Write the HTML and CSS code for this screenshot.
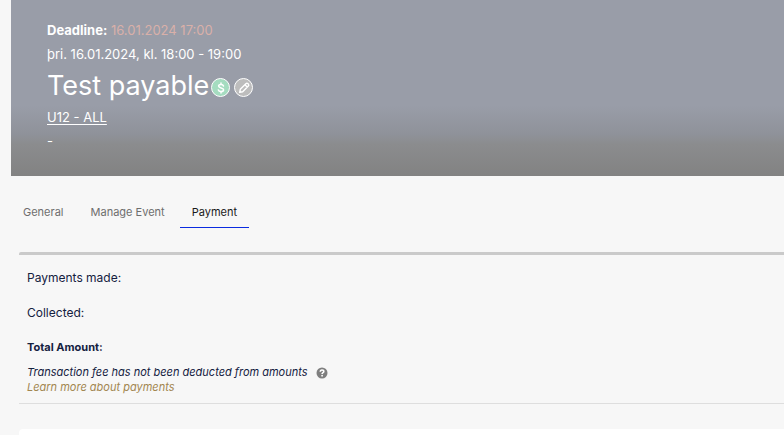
FILE: index.html
```html
<!DOCTYPE html>
<html lang="en">
<head>
    <meta charset="UTF-8">
    <meta name="viewport" content="width=device-width, initial-scale=1.0">
    <title>Test payable</title>
    <link rel="stylesheet" href="styles.css">
</head>
<body>
    <header class="event-header">
        <p class="deadline"><strong>Deadline:</strong> <span class="deadline-date">16.01.2024 17:00</span></p>
        <p class="event-time">þri. 16.01.2024, kl. 18:00 - 19:00</p>
        <div class="title-row">
            <h1>Test payable</h1>
            <div class="badges">
                <button class="badge badge-paid" type="button" aria-label="Payable">
                    <svg viewBox="0 0 16 16" width="16" height="16" fill="none" stroke="#fff" stroke-linecap="round">
                        <path stroke-width="1.5" d="M10.5 6C10.2 4.9 9.2 4.4 8 4.4C6.6 4.4 5.6 5 5.6 6.1C5.6 8.5 10.6 7.3 10.6 9.8C10.6 11 9.5 11.6 8 11.6C6.6 11.6 5.6 11 5.3 9.9M8 3V4.4M8 11.6V13"/>
                    </svg>
                </button>
                <button class="badge badge-edit" type="button" aria-label="Edit">
                    <svg viewBox="0 0 16 16" width="16" height="16" fill="none" stroke="#fff" stroke-linejoin="round">
                        <path stroke-width="1.4" d="M3.7 12.3L4.3 9.3L9.9 3.7C10.5 3.1 11.3 3.1 11.8 3.6L12.4 4.2C12.9 4.7 12.9 5.5 12.3 6.1L6.7 11.7ZM8.9 4.7L11.3 7.1"/>
                    </svg>
                </button>
            </div>
        </div>
        <a class="group-link" href="#">U12 - ALL</a>
        <p class="location">-</p>
    </header>

    <nav class="tabs">
        <a class="tab" href="#">General</a>
        <a class="tab" href="#">Manage Event</a>
        <a class="tab active" href="#">Payment</a>
    </nav>

    <main class="content">
        <section class="summary">
            <p class="summary-row">Payments made:</p>
            <p class="summary-row">Collected:</p>
            <p class="summary-row total">Total Amount:</p>
            <div class="note">
                <span>Transaction fee has not been deducted from amounts</span>
                <button class="help" type="button" aria-label="Help">
                    <svg viewBox="0 0 12 12" width="12" height="12">
                        <circle cx="6" cy="6" r="5.5" fill="#7f7f7f"/>
                        <path d="M4.3 4.7C4.3 3.6 5 3 6 3C7.1 3 7.8 3.6 7.8 4.5C7.8 5.6 6.1 5.6 6.1 6.9" fill="none" stroke="#fff" stroke-width="1.6"/>
                        <circle cx="6.1" cy="8.7" r="0.9" fill="#fff"/>
                    </svg>
                </button>
            </div>
            <a class="learn-more" href="#">Learn more about payments</a>
        </section>
        <section class="card"></section>
    </main>
</body>
</html>
```
FILE: styles.css
```css
* {
    box-sizing: border-box;
}
body {
    margin: 0;
    background-color: #f7f7f7;
    color: #14213f;
    font-family: Inter, "Liberation Sans", sans-serif;
    font-size: 11px;
    line-height: 15px;
}
p, h1 {
    margin: 0;
}
button {
    padding: 0;
    border: none;
    background: none;
    cursor: pointer;
}
svg {
    display: block;
}
.event-header {
    margin-left: 11px;
    padding: 18px 36px 23px;
    color: #fff;
    font-size: 13px;
    line-height: 24px;
    background: linear-gradient(to bottom, #999da8 0%, #999da8 60%, #8f929a 76%, #8b8c8e 82%, #828282 100%);
}
.deadline-date {
    color: #d9b0a9;
}
.title-row {
    display: flex;
    align-items: center;
    gap: 2px;
}
.title-row h1 {
    font-size: 27px;
    font-weight: 400;
    line-height: 39px;
}
.badges {
    display: flex;
    gap: 4px;
    margin-top: 4px;
}
.badge {
    width: 19px;
    height: 19px;
    border: 1px solid #fff;
    border-radius: 50%;
    display: flex;
    align-items: center;
    justify-content: center;
}
.badge-paid {
    background-color: #a5dcc0;
}
.badge-edit {
    background-color: #bdbdbd;
}
.group-link {
    display: block;
    width: fit-content;
    color: #fff;
    text-underline-offset: 2px;
}
.tabs {
    display: flex;
    margin: 20px 11px 24px;
    gap: 3px;
}
.tab {
    padding: 9px 12px 7px;
    border-bottom: 1px solid transparent;
    color: #6e6e6e;
    text-decoration: none;
}
.tab.active {
    border-color: #0a2be0;
    color: #1a1a1a;
}
.content {
    margin-left: 19px;
}
.summary {
    padding: 15px 8px 8px;
    border-top: 3px solid #cacaca;
    border-bottom: 1px solid #dedede;
    border-top-left-radius: 2px;
}
.summary-row {
    margin-bottom: 20px;
    font-size: 12px;
}
.summary-row.total {
    margin-bottom: 10px;
    font-size: 11px;
    font-weight: 700;
}
.note {
    display: flex;
    align-items: center;
    gap: 8px;
    font-style: italic;
}
.learn-more {
    display: block;
    width: fit-content;
    color: #a28650;
    font-style: italic;
    text-decoration: none;
}
.card {
    min-height: 6px;
    margin-top: 25px;
    border-radius: 4px 0 0 0;
    background-color: #fff;
}
```
